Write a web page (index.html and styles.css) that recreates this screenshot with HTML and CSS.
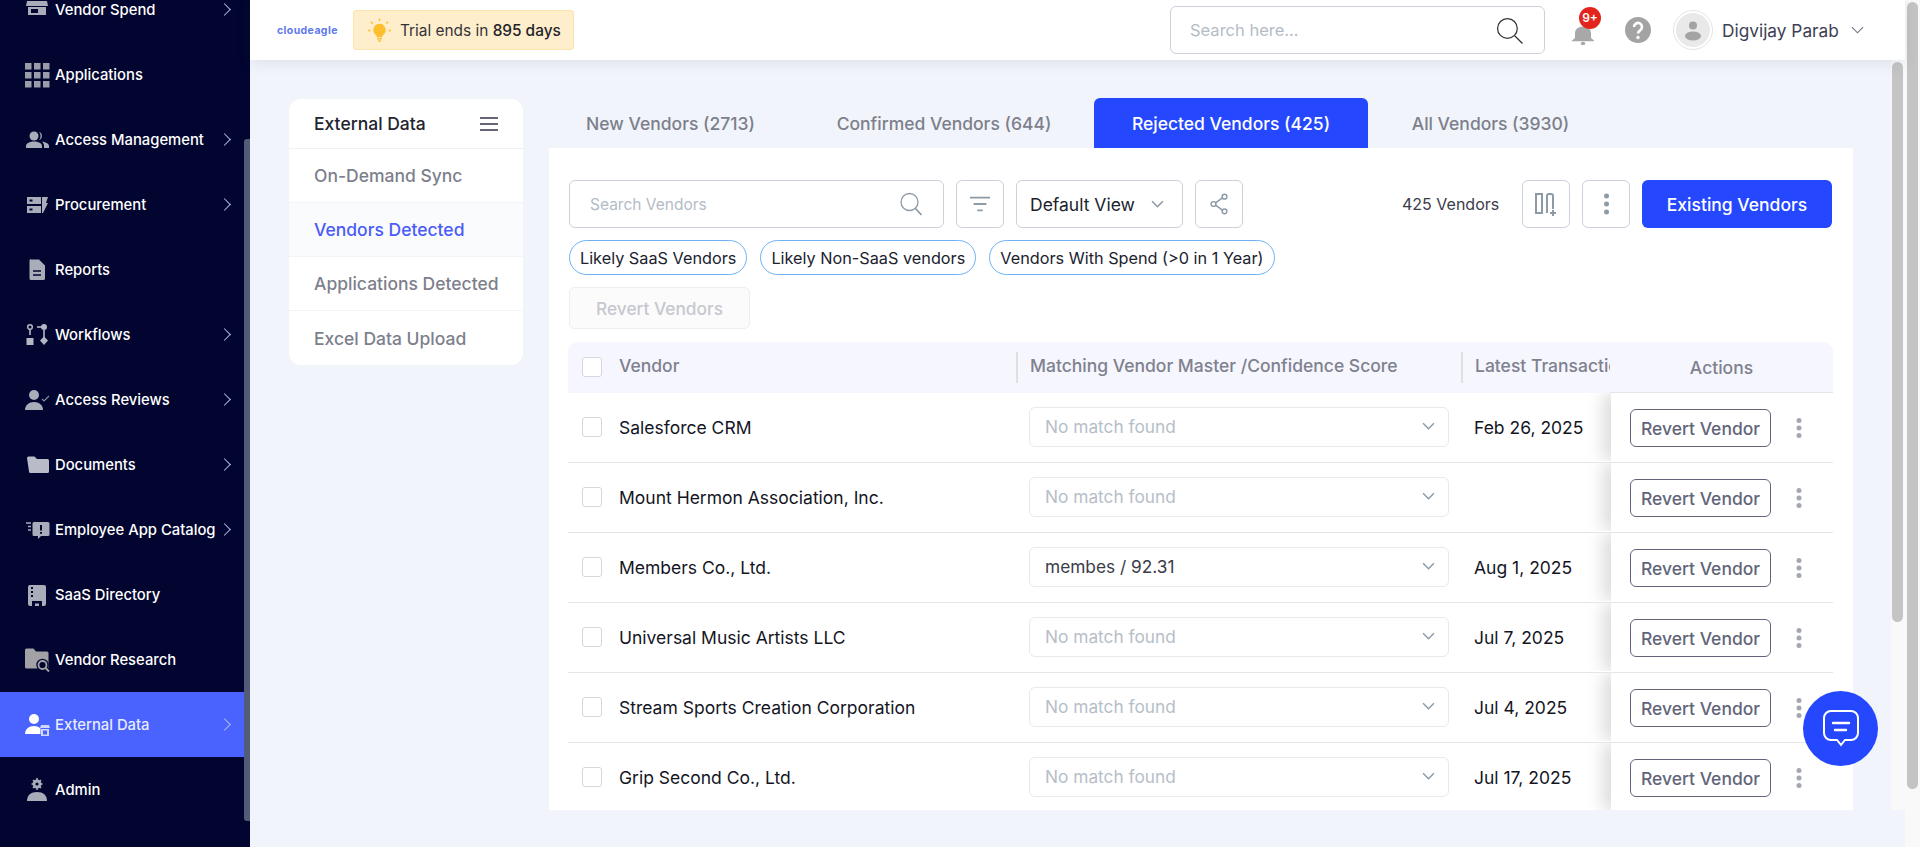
FILE: index.html
```html
<!DOCTYPE html>
<html lang="en">
<head>
<meta charset="utf-8">
<title>External Data - Vendors Detected</title>
<link rel="stylesheet" href="styles.css">
</head>
<body>
<div class="app">
  <aside class="sidebar">
    <nav class="nav">
      <a class="nav-item"><svg class="nav-icon" viewBox="0 0 26 26"><path d="M4 0h18v3H4zM3 4h20l1 5H2z" fill="#a9acb9"/><path fill-rule="evenodd" d="M4 10h18v8H4zM7 12v4h7v-4z" fill="#a9acb9"/></svg><span class="nav-label">Vendor Spend</span><span class="nav-chev"></span></a>
      <a class="nav-item"><svg class="nav-icon" viewBox="0 0 26 26" fill="#9a9da9"><rect x="1" y="1" width="6.5" height="6.5"/><rect x="10" y="1" width="6.5" height="6.5"/><rect x="19" y="1" width="6.5" height="6.5"/><rect x="1" y="10" width="6.5" height="6.5"/><rect x="10" y="10" width="6.5" height="6.5"/><rect x="19" y="10" width="6.5" height="6.5"/><rect x="1" y="19" width="6.5" height="6.5"/><rect x="10" y="19" width="6.5" height="6.5"/><rect x="19" y="19" width="6.5" height="6.5"/></svg><span class="nav-label">Applications</span></a>
      <a class="nav-item"><svg class="nav-icon" viewBox="0 0 26 26" fill="#a9acb9"><circle cx="10" cy="9" r="4.500"/><path d="M2 21v-2c0-3 4-4.500 8-4.500s8 1.500 8 4.500v2z"/><path d="M15 4.800a4.500 4.500 0 0 1 0 8.400c1-1.200 1.500-2.600 1.500-4.200S16 6 15 4.800zM18 14.500c3 .5 7 1.700 7 4.500v2h-5v-2c0-2-1-3.500-2-4.500z"/></svg><span class="nav-label">Access Management</span><span class="nav-chev"></span></a>
      <a class="nav-item"><svg class="nav-icon" viewBox="0 0 26 26" fill="#a9acb9"><path fill-rule="evenodd" d="M3 5h14v7H3zM5.500 7.500v2h3v-2z"/><path fill-rule="evenodd" d="M3 14h14v7H3zM5.500 16.500v2h3v-2z"/><path d="M18 5h6l-2 6h2l-5 10h-1z"/></svg><span class="nav-label">Procurement</span><span class="nav-chev"></span></a>
      <a class="nav-item"><svg class="nav-icon" viewBox="0 0 26 26"><path d="M7 2.500h8l6 6v13a1.500 1.500 0 0 1-1.500 1.500h-12.500a1.500 1.500 0 0 1-1.500-1.500v-18a1.500 1.500 0 0 1 1.500-1.500z" fill="#a9acb9"/><path d="M9 14h8M9 18h8" stroke="#01052f" stroke-width="1.500"/></svg><span class="nav-label">Reports</span></a>
      <a class="nav-item"><svg class="nav-icon" viewBox="0 0 26 26" fill="#b4b6c2"><circle cx="6" cy="5" r="2.300" fill="none" stroke="#b4b6c2" stroke-width="1.500"/><rect x="5.200" y="7" width="1.600" height="6"/><rect x="2.500" y="16" width="7" height="7"/><circle cx="20" cy="5" r="3"/><rect x="13" y="4.200" width="6" height="1.600"/><rect x="19.200" y="8" width="1.600" height="8"/><path d="M20 14.500l4 4-4 4.500-4-4.500z"/></svg><span class="nav-label">Workflows</span><span class="nav-chev"></span></a>
      <a class="nav-item"><svg class="nav-icon" viewBox="0 0 26 26"><circle cx="10" cy="8" r="5" fill="#a9acb9"/><path d="M1 23c0-5 4-8 9-8s9 3 9 8z" fill="#a9acb9"/><path d="M18 12l2 2 5-5" fill="none" stroke="#888b9b" stroke-width="1.200"/></svg><span class="nav-label">Access Reviews</span><span class="nav-chev"></span></a>
      <a class="nav-item"><svg class="nav-icon" viewBox="0 0 26 26"><path d="M3 6a1.500 1.500 0 0 1 1.500-1.500h6l2.500 2.500h10.500a1.500 1.500 0 0 1 1.500 1.500v11a1.500 1.500 0 0 1-1.500 1.500h-17a1.500 1.500 0 0 1-1.500-1.500z" fill="#b9bbc8"/></svg><span class="nav-label">Documents</span><span class="nav-chev"></span></a>
      <a class="nav-item"><svg class="nav-icon" viewBox="0 0 26 26"><path d="M10 5h14a1.500 1.500 0 0 1 1.500 1.500v11a1.500 1.500 0 0 1-1.500 1.500h-7l-3 3v-3h-4a1.500 1.500 0 0 1-1.500-1.500v-11a1.500 1.500 0 0 1 1.500-1.500z" fill="#a9acb9"/><path d="M17 8v5.500M17 15v1.800" stroke="#01052f" stroke-width="2"/><path d="M2 6h5M4 9.500h3M4 13h3" stroke="#a9acb9" stroke-width="1.400"/></svg><span class="nav-label">Employee App Catalog</span><span class="nav-chev"></span></a>
      <a class="nav-item"><svg class="nav-icon" viewBox="0 0 26 26"><path d="M6 3h14a2 2 0 0 1 2 2v17a2 2 0 0 1-2 2H6a2 2 0 0 1-2-2V5a2 2 0 0 1 2-2z" fill="#a9acb9"/><path d="M7 6h2M7 10h2M7 14h2" stroke="#01052f" stroke-width="1.800"/><path d="M8 24v-5h10v5h-3v-2.500h-4V24z" fill="#01052f"/></svg><span class="nav-label">SaaS Directory</span></a>
      <a class="nav-item"><svg class="nav-icon" viewBox="0 0 26 26"><path d="M1 3a1.500 1.500 0 0 1 1.500-1.500h7l2.500 3h11a1.500 1.500 0 0 1 1.500 1.500v14a1.500 1.500 0 0 1-1.500 1.500h-20.500a1.500 1.500 0 0 1-1.500-1.500z" fill="#a2a2a6"/><circle cx="18.500" cy="18" r="6.200" fill="#01052f"/><circle cx="18.500" cy="18" r="4" fill="none" stroke="#a2a2a6" stroke-width="1.800"/><path d="M21.500 21l3.500 3.500" stroke="#a2a2a6" stroke-width="1.800"/></svg><span class="nav-label">Vendor Research</span></a>
      <a class="nav-item active"><svg class="nav-icon" viewBox="0 0 26 26"><circle cx="10" cy="7" r="5" fill="#fff"/><path d="M1 22c0-5 4-8 9-8 3 0 5 1 6.500 2.500v5.500z" fill="#fff"/><path d="M17 13h8l1 3H16z" fill="#cfd6ff"/><path fill-rule="evenodd" d="M17 17h8v7h-8zM19 18.500v4h4v-4z" fill="#cfd6ff"/></svg><span class="nav-label">External Data</span><span class="nav-chev"></span></a>
      <a class="nav-item"><svg class="nav-icon" viewBox="0 0 26 26" fill="#a9acb9"><circle cx="13" cy="7" r="4.500"/><circle cx="13" cy="7" r="1.600" fill="#01052f"/><path d="M13 1v2M13 11v2M7.500 7h2M16.500 7h2M9 3l1.500 1.500M15.500 9.500L17 11M17 3l-1.500 1.500M9 11l1.500-1.500" stroke="#a9acb9" stroke-width="1.600"/><path d="M3 24c0-6 4-9 10-9s10 3 10 9z"/></svg><span class="nav-label">Admin</span></a>
    </nav>
    <div class="sidebar-thumb"></div>
  </aside>

  <div class="main">
    <header class="topbar">
      <span class="logo">cloudeagle</span>
      <div class="trial">
        <svg class="bulb" viewBox="0 0 26 26"><path d="M13 6a6.500 6.500 0 0 0-4 11.500c1 1 1.200 2 1.200 2.500h5.600c0-.5.2-1.500 1.200-2.500A6.500 6.500 0 0 0 13 6z" fill="#fdbf2d"/><path d="M10.500 21.500h5M11.500 24h3" stroke="#fdbf2d" stroke-width="1.500"/><path d="M13 .5v2.500M4 4l2 2M22 4l-2 2M1 13h2.500M22.500 13H25" stroke="#fdbf2d" stroke-width="1.500"/></svg>
        <span class="trial-text">Trial ends in <span class="trial-days">895 days</span></span>
      </div>
      <div class="top-search">
        <span class="top-placeholder">Search here...</span>
        <svg class="top-search-icon" viewBox="0 0 26 26" fill="none" stroke="#333" stroke-width="1.200"><circle cx="11" cy="11" r="9.500"/><path d="M18 18l7.500 7.500"/></svg>
      </div>
      <div class="bell-wrap">
        <svg class="bell" viewBox="0 0 24 26" preserveAspectRatio="none" fill="#a8a8a8"><path d="M12 2a8 8 0 0 0-8 8v7l-3 3v1h22v-1l-3-3v-7a8 8 0 0 0-8-8z"/><circle cx="12" cy="24" r="2.200"/></svg>
        <span class="badge">9+</span>
      </div>
      <svg class="help" viewBox="0 0 26 26"><circle cx="13" cy="13" r="13" fill="#a3a3a3"/><path d="M9 10a4 4 0 1 1 6.200 3.300c-1.300.9-2.200 1.500-2.200 3.200" fill="none" stroke="#fff" stroke-width="2.600"/><circle cx="13" cy="20.500" r="1.700" fill="#fff"/></svg>
      <div class="avatar">
        <svg class="avatar-img" viewBox="0 0 34 34"><circle cx="17" cy="17" r="17" fill="#e9e9e9"/><circle cx="17" cy="12.500" r="4" fill="#a3a3a3"/><ellipse cx="17" cy="23" rx="8" ry="4.500" fill="#a3a3a3"/></svg>
      </div>
      <span class="user-name">Digvijay Parab</span>
      <svg class="user-chev" viewBox="0 0 14 8" fill="none" stroke="#6d7183" stroke-width="1.200"><path d="M1 1l6 6 6-6"/></svg>
    </header>

    <div class="content">
      <section class="panel">
        <div class="panel-head"><span>External Data</span><svg class="burger" viewBox="0 0 18 14" stroke="#33364a" stroke-width="1.600"><path d="M0 1h18M0 7h18M0 13h18"/></svg></div>
        <a class="panel-item">On-Demand Sync</a>
        <a class="panel-item selected">Vendors Detected</a>
        <a class="panel-item">Applications Detected</a>
        <a class="panel-item last">Excel Data Upload</a>
      </section>

      <section class="work">
        <div class="tabs">
          <a class="tab tab-new">New Vendors (2713)</a>
          <a class="tab tab-confirmed">Confirmed Vendors (644)</a>
          <a class="tab tab-rejected">Rejected Vendors (425)</a>
          <a class="tab tab-all">All Vendors (3930)</a>
        </div>
        <div class="card">
          <div class="toolbar">
            <div class="search">
              <span class="search-ph">Search Vendors</span>
              <svg class="search-icon" viewBox="0 0 22 24" fill="none" stroke="#8f9aa5" stroke-width="1.300"><circle cx="9.500" cy="10" r="8.500"/><path d="M15.500 16.500l6 6.500" stroke-width="1.800"/></svg>
            </div>
            <button class="icon-btn"><svg class="icon-20" viewBox="0 0 22 16" stroke="#8d9ba6" stroke-width="2"><path d="M0 1h22M4 8h14M8 15h6"/></svg></button>
            <button class="view-btn"><span>Default View</span><svg class="view-chev" viewBox="0 0 12 7" fill="none" stroke="#8d9ba6" stroke-width="1.500"><path d="M1 1l5 5 5-5"/></svg></button>
            <button class="icon-btn"><svg class="icon-20" viewBox="0 0 20 24" fill="none" stroke="#8d9ba6" stroke-width="1.600"><circle cx="16" cy="4" r="2.600"/><circle cx="16" cy="20" r="2.600"/><circle cx="4" cy="12" r="2.600"/><path d="M6.300 10.700l7.400-5.400M6.300 13.300l7.400 5.400"/></svg></button>
            <span class="count">425 Vendors</span>
            <button class="icon-btn"><svg class="icon-24" viewBox="0 0 24 24" fill="none" stroke="#8d9ba6" stroke-width="2"><path d="M2 2h6v19H2zM13 21V4a2 2 0 0 1 2-2h2a2 2 0 0 1 2 2v13"/><path d="M19 18v6M16 21h6"/></svg></button>
            <button class="icon-btn"><svg class="dots-lg" viewBox="0 0 6 22" fill="#8d9ba6"><circle cx="3" cy="3" r="2.500"/><circle cx="3" cy="11" r="2.500"/><circle cx="3" cy="19" r="2.500"/></svg></button>
            <button class="primary">Existing Vendors</button>
          </div>
          <div class="chips">
            <span class="chip">Likely SaaS Vendors</span>
            <span class="chip">Likely Non-SaaS vendors</span>
            <span class="chip">Vendors With Spend (&gt;0 in 1 Year)</span>
          </div>
          <button class="bulk" disabled>Revert Vendors</button>

          <div class="table">
            <div class="row head">
              <div class="cell-check"><span class="check"></span></div>
              <div class="cell-vendor">Vendor</div>
              <div class="cell-match sep">Matching Vendor Master /Confidence Score</div>
              <div class="cell-date sep">Latest Transaction Date</div>
              <div class="cell-actions head-actions">Actions</div>
            </div>
            <div class="row">
              <div class="cell-check"><span class="check"></span></div>
              <div class="cell-vendor">Salesforce CRM</div>
              <div class="cell-match"><div class="select"><span class="none">No match found</span><svg class="sel-chev" viewBox="0 0 12 7" fill="none" stroke="#8d9ba6" stroke-width="1.400"><path d="M1 1l5 5 5-5"/></svg></div></div>
              <div class="cell-date">Feb 26, 2025</div>
              <div class="cell-actions"><button class="revert">Revert Vendor</button><svg class="dots" viewBox="0 0 6 20" fill="#a3a8b0"><circle cx="3" cy="2.500" r="2.500"/><circle cx="3" cy="10" r="2.500"/><circle cx="3" cy="17.500" r="2.500"/></svg></div>
            </div>
            <div class="row">
              <div class="cell-check"><span class="check"></span></div>
              <div class="cell-vendor">Mount Hermon Association, Inc.</div>
              <div class="cell-match"><div class="select"><span class="none">No match found</span><svg class="sel-chev" viewBox="0 0 12 7" fill="none" stroke="#8d9ba6" stroke-width="1.400"><path d="M1 1l5 5 5-5"/></svg></div></div>
              <div class="cell-date"></div>
              <div class="cell-actions"><button class="revert">Revert Vendor</button><svg class="dots" viewBox="0 0 6 20" fill="#a3a8b0"><circle cx="3" cy="2.500" r="2.500"/><circle cx="3" cy="10" r="2.500"/><circle cx="3" cy="17.500" r="2.500"/></svg></div>
            </div>
            <div class="row">
              <div class="cell-check"><span class="check"></span></div>
              <div class="cell-vendor">Members Co., Ltd.</div>
              <div class="cell-match"><div class="select"><span class="value">membes / 92.31</span><svg class="sel-chev" viewBox="0 0 12 7" fill="none" stroke="#8d9ba6" stroke-width="1.400"><path d="M1 1l5 5 5-5"/></svg></div></div>
              <div class="cell-date">Aug 1, 2025</div>
              <div class="cell-actions"><button class="revert">Revert Vendor</button><svg class="dots" viewBox="0 0 6 20" fill="#a3a8b0"><circle cx="3" cy="2.500" r="2.500"/><circle cx="3" cy="10" r="2.500"/><circle cx="3" cy="17.500" r="2.500"/></svg></div>
            </div>
            <div class="row">
              <div class="cell-check"><span class="check"></span></div>
              <div class="cell-vendor">Universal Music Artists LLC</div>
              <div class="cell-match"><div class="select"><span class="none">No match found</span><svg class="sel-chev" viewBox="0 0 12 7" fill="none" stroke="#8d9ba6" stroke-width="1.400"><path d="M1 1l5 5 5-5"/></svg></div></div>
              <div class="cell-date">Jul 7, 2025</div>
              <div class="cell-actions"><button class="revert">Revert Vendor</button><svg class="dots" viewBox="0 0 6 20" fill="#a3a8b0"><circle cx="3" cy="2.500" r="2.500"/><circle cx="3" cy="10" r="2.500"/><circle cx="3" cy="17.500" r="2.500"/></svg></div>
            </div>
            <div class="row">
              <div class="cell-check"><span class="check"></span></div>
              <div class="cell-vendor">Stream Sports Creation Corporation</div>
              <div class="cell-match"><div class="select"><span class="none">No match found</span><svg class="sel-chev" viewBox="0 0 12 7" fill="none" stroke="#8d9ba6" stroke-width="1.400"><path d="M1 1l5 5 5-5"/></svg></div></div>
              <div class="cell-date">Jul 4, 2025</div>
              <div class="cell-actions"><button class="revert">Revert Vendor</button><svg class="dots" viewBox="0 0 6 20" fill="#a3a8b0"><circle cx="3" cy="2.500" r="2.500"/><circle cx="3" cy="10" r="2.500"/><circle cx="3" cy="17.500" r="2.500"/></svg></div>
            </div>
            <div class="row">
              <div class="cell-check"><span class="check"></span></div>
              <div class="cell-vendor">Grip Second Co., Ltd.</div>
              <div class="cell-match"><div class="select"><span class="none">No match found</span><svg class="sel-chev" viewBox="0 0 12 7" fill="none" stroke="#8d9ba6" stroke-width="1.400"><path d="M1 1l5 5 5-5"/></svg></div></div>
              <div class="cell-date">Jul 17, 2025</div>
              <div class="cell-actions"><button class="revert">Revert Vendor</button><svg class="dots" viewBox="0 0 6 20" fill="#a3a8b0"><circle cx="3" cy="2.500" r="2.500"/><circle cx="3" cy="10" r="2.500"/><circle cx="3" cy="17.500" r="2.500"/></svg></div>
            </div>
          </div>
        </div>
      </section>
    </div>
  </div>

  <div class="track-inner"><div class="thumb-inner"></div></div>
  <div class="track-outer"><div class="thumb-outer"></div></div>
  <button class="chat"><svg class="chat-icon" viewBox="0 0 40 40" fill="none" stroke="#fff" stroke-width="2"><path d="M10 2h20a7 7 0 0 1 7 7v15a7 7 0 0 1-7 7h-6l-4 5-4-5h-6a7 7 0 0 1-7-7V9a7 7 0 0 1 7-7z"/><path d="M12 14h16M14 21h11" stroke-width="2.400" stroke-linecap="round"/></svg></button>
</div>
</body>
</html>
```

FILE: styles.css
```css
* { box-sizing: border-box; }
html, body { margin: 0; height: 847px; overflow: hidden; }
body { font-family: Inter, "Liberation Sans", sans-serif; background: #f1f4fa; color: #14151f; }
button { font-family: inherit; cursor: pointer; }

.app { position: relative; display: flex; width: 1920px; height: 847px; overflow: hidden; }

/* Sidebar */
.sidebar { position: relative; flex: 0 0 250px; height: 847px; background: #01052f; overflow: hidden; }
.nav { display: flex; flex-direction: column; width: 244px; margin-top: -23px; }
.nav-item { display: flex; align-items: center; height: 65px; padding-left: 24px; color: #fff; font-size: 14.8px; font-weight: 500; }
.nav-item.active { background: #4a63ff; color: #e8ebff; }
.nav-icon { flex: 0 0 26px; width: 26px; height: 26px; margin-right: 5px; }
.nav-label { flex: 1; white-space: nowrap; }
.nav-chev { width: 9px; height: 9px; margin-right: 15px; border-top: 1.500px solid #b5bbe6; border-right: 1.500px solid #b5bbe6; transform: rotate(45deg); }
.sidebar-thumb { position: absolute; right: 0; top: 139px; width: 6px; height: 682px; background: #525b78; border-radius: 3px 0 0 3px; }

/* Main column */
.main { flex: 1; display: flex; flex-direction: column; min-width: 0; }
.topbar { position: relative; display: flex; align-items: center; flex: 0 0 60px; width: 1655px; background: #fff; box-shadow: 0 2px 14px rgba(60, 75, 110, .12); z-index: 2; }
.logo { width: 76px; margin-left: 27px; color: #5f79ec; font-size: 10.5px; font-weight: 700; letter-spacing: .4px; white-space: nowrap; }
.trial { display: flex; align-items: center; width: 221px; height: 40px; padding-left: 13px; background: #ffeecb; border: 1px solid #fbe3ae; border-radius: 3px; }
.bulb { width: 25px; height: 25px; margin-right: 8px; }
.trial-text { color: #33343a; font-size: 15.4px; white-space: nowrap; }
.trial-days { font-weight: 500; color: #22232a; }
.top-search { display: flex; align-items: center; justify-content: space-between; width: 375px; height: 48px; margin-left: 596px; padding: 0 21px 0 19px; border: 1px solid #cdd1dc; border-radius: 6px; }
.top-placeholder { color: #b3bcc6; font-size: 16.5px; }
.top-search-icon { width: 27px; height: 27px; }
.bell-wrap { position: relative; width: 24px; height: 24px; margin-left: 26px; }
.bell { display: block; width: 24px; height: 20px; margin-top: 7px; }
.badge { position: absolute; left: 8px; top: -11px; width: 22px; height: 22px; border-radius: 50%; background: #e2241c; color: #fff; font-size: 12px; font-weight: 600; line-height: 22px; text-align: center; }
.help { width: 26px; height: 26px; margin-left: 30px; }
.avatar { display: flex; align-items: center; justify-content: center; width: 40px; height: 40px; margin-left: 22px; border: 1px solid #e4e4e4; border-radius: 50%; }
.avatar-img { width: 34px; height: 34px; }
.user-name { margin-left: 9px; color: #3d4054; font-size: 17.3px; white-space: nowrap; }
.user-chev { width: 13px; height: 8px; margin-left: 12px; }

.content { display: flex; flex: 1; padding: 39px 0 0 39px; min-height: 0; }

/* Left panel */
.panel { flex: 0 0 234px; height: 266px; background: #fff; border-radius: 12px; overflow: hidden; }
.panel-head { display: flex; align-items: center; justify-content: space-between; height: 50px; padding: 0 25px; color: #22242f; font-size: 17.5px; font-weight: 500; border-bottom: 1px solid #f0f1f5; }
.burger { width: 18px; height: 14px; }
.panel-item { display: flex; align-items: center; height: 54px; padding-left: 25px; color: #7d7f8c; font-size: 17.5px; font-weight: 500; border-bottom: 1px solid #f3f4f8; white-space: nowrap; }
.panel-item.selected { background: #fafbfd; color: #4a5bf6; }
.panel-item.last { border-bottom: 0; }

/* Work area */
.work { flex: 0 0 1304px; margin-left: 26px; margin-top: -1px; }
.tabs { display: flex; height: 50px; }
.tab { display: flex; align-items: center; justify-content: center; height: 50px; font-size: 17.5px; font-weight: 500; color: #7d7f8c; white-space: nowrap; }
.tab-new { margin-left: 37px; width: 169px; }
.tab-confirmed { margin-left: 82px; width: 214px; }
.tab-rejected { margin-left: 43px; width: 274px; background: #2548ff; color: #fff; border-radius: 6px 6px 0 0; }
.tab-all { margin-left: 44px; width: 157px; }

.card { height: 662px; padding: 32px 20px 0 20px; background: #fff; overflow: hidden; }
.toolbar { display: flex; align-items: center; height: 48px; }
.search { display: flex; align-items: center; justify-content: space-between; width: 375px; height: 48px; padding: 0 21px 0 20px; border: 1px solid #cdd1dc; border-radius: 6px; }
.search-ph { color: #b3bcc6; font-size: 15.5px; }
.search-icon { width: 22px; height: 24px; }
.icon-btn { display: flex; align-items: center; justify-content: center; flex: 0 0 48px; height: 48px; margin-left: 12px; padding: 0; background: #fff; border: 1px solid #cdd1dc; border-radius: 6px; }
.icon-20 { width: 20px; height: 22px; }
.icon-24 { width: 24px; height: 24px; }
.dots-lg { width: 7px; height: 22px; }
.view-btn { display: flex; align-items: center; justify-content: space-between; width: 167px; height: 48px; margin-left: 12px; padding: 0 18px 0 13px; background: #fff; border: 1px solid #cdd1dc; border-radius: 6px; color: #20222e; font-size: 17.5px; font-weight: 400; }
.view-chev { width: 13px; height: 8px; }
.count { width: 120px; margin-left: 159px; color: #3a3c49; font-size: 16px; white-space: nowrap; }
.toolbar .count + .icon-btn { margin-left: 0; }
.primary { flex: 0 0 190px; height: 48px; margin-left: 12px; background: #2548ff; border: 0; border-radius: 6px; color: #fff; font-size: 17.5px; font-weight: 500; }

.chips { display: flex; gap: 13px; margin-top: 12px; }
.chip { display: flex; align-items: center; height: 35px; padding: 0 10px; border: 1px solid #6fb2f7; border-radius: 18px; color: #20222e; font-size: 16.25px; white-space: nowrap; }
.bulk { display: block; width: 181px; height: 42px; margin-top: 12px; background: #fbfbfb; border: 1px solid #eeeef2; border-radius: 6px; color: #c6c8cf; font-size: 17.3px; font-weight: 500; }

/* Table */
.table { width: 1265px; margin-top: 13px; margin-left: -1px; }
.row { display: flex; align-items: center; height: 70px; padding-bottom: 1px; border-bottom: 1px solid #e4e5ea; }
.row.head { height: 51px; padding-bottom: 0; background: #f5f6fe; border-bottom: 0; border-radius: 10px 10px 0 0; color: #7f818e; font-size: 17.5px; font-weight: 500; }
.cell-check { flex: 0 0 51px; padding-left: 14px; display: flex; }
.head .cell-check { margin-bottom: 1px; }
.check { width: 20px; height: 20px; background: #fff; border: 1px solid #d6d7de; border-radius: 3px; }
.cell-vendor { flex: 0 0 397px; font-size: 17.5px; white-space: nowrap; }
.cell-match { flex: 0 0 445px; padding: 0 13px; white-space: nowrap; }
.cell-date { flex: 0 0 149px; padding-left: 12px; font-size: 17.5px; white-space: nowrap; overflow: hidden; }
.sep { display: flex; align-items: center; height: 31px; border-left: 2px solid #dfe0e6; }
.head .cell-vendor, .head .sep { padding-bottom: 5px; }
.head .cell-match.sep { padding-left: 12px; }
.cell-actions { position: relative; flex: 0 0 223px; display: flex; align-items: center; height: 100%; padding: 2px 0 0 19px; background: #fff; box-shadow: -8px 0 16px rgba(0, 0, 0, .14); clip-path: inset(0 0 0 -30px); }
.head-actions { justify-content: center; padding: 0; background: #f5f6fe; box-shadow: none; clip-path: none; border-radius: 0 10px 0 0; border-bottom: 1px solid #e4e5ea; }
.select { display: flex; align-items: center; justify-content: space-between; width: 420px; height: 40px; padding: 0 13px 2px 15px; border: 1px solid #e8e9ee; border-radius: 6px; font-size: 17.3px; }
.none { color: #b6bec7; }
.value { color: #3a3c49; }
.sel-chev { width: 13px; height: 8px; }
.revert { width: 141px; height: 38px; padding: 0; background: #fff; border: 1px solid #62657a; border-radius: 6px; color: #62657a; font-size: 17.5px; font-weight: 500; white-space: nowrap; }
.dots { width: 6px; height: 20px; margin-left: 25px; }

/* Page scrollbars and floating chat */
.track-inner { position: absolute; left: 1891px; top: 60px; width: 14px; height: 750px; background: #f9f9f9; }
.thumb-inner { width: 11px; height: 560px; margin: 2px 0 0 1px; background: #c4c4c4; border-radius: 6px; }
.track-outer { position: absolute; left: 1905px; top: 0; width: 15px; height: 847px; background: #f9f9f9; }
.thumb-outer { width: 11px; height: 787px; margin: 2px 0 0 2px; background: #c4c4c4; border-radius: 6px; }
.chat { position: absolute; left: 1803px; top: 691px; display: flex; align-items: center; justify-content: center; width: 75px; height: 75px; padding: 0; background: #2548ff; border: 0; border-radius: 50%; z-index: 3; }
.chat-icon { width: 40px; height: 40px; }
```
